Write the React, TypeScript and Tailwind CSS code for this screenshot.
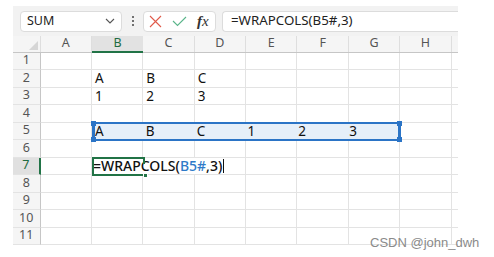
import React from "react";

const COLS = ["A", "B", "C", "D", "E", "F", "G", "H"];
const ROWS = [1, 2, 3, 4, 5, 6, 7, 8, 9, 10, 11];

const cellData: Record<string, string> = {
  "2-1": "A",
  "2-2": "B",
  "2-3": "C",
  "3-1": "1",
  "3-2": "2",
  "3-3": "3",
};

export default function App() {
  return (
    <div
      className="relative w-[494px] h-[257px] bg-white overflow-hidden"
      style={{ fontFamily: '"Noto Sans", "Open Sans", sans-serif' }}
    >
      <div className="ml-[13px] mt-[6px] w-[445px]">
        {/* toolbar */}
        <div className="h-[30px] bg-[#f2f2f2] flex items-center pl-[7px]">
          <div className="w-[102px] h-[21px] bg-white border border-[#dcdcdc] rounded-[4px] flex items-center justify-between pl-[6px] pr-[6px]">
            <span className="text-[12.5px] text-[#222]">SUM</span>
            <svg width="10" height="6" viewBox="0 0 10 6">
              <path d="M1 1 L5 5 L9 1" stroke="#555" strokeWidth="1.1" fill="none" />
            </svg>
          </div>
          <div className="w-[21px] flex flex-col items-center justify-center gap-[2px]">
            <span className="w-[2px] h-[2px] bg-[#444] rounded-full" />
            <span className="w-[2px] h-[2px] bg-[#444] rounded-full" />
            <span className="w-[2px] h-[2px] bg-[#444] rounded-full" />
          </div>
          <div className="w-[73px] h-[21px] bg-white border border-[#dcdcdc] rounded-[4px] flex items-center pl-[5px]">
            <svg width="13" height="13" viewBox="0 0 13 13">
              <path d="M1 1 L12 12 M12 1 L1 12" stroke="#e05a4a" strokeWidth="1.1" fill="none" />
            </svg>
            <svg width="15" height="12" viewBox="0 0 15 12" className="ml-[10px]">
              <path d="M1 6 L5.5 10.5 L14 2" stroke="#5ab58a" strokeWidth="1.1" fill="none" />
            </svg>
            <span
              className="ml-[10px] text-[15px] italic text-[#333] leading-none"
              style={{ fontFamily: '"Liberation Serif", serif' }}
            >
              <b>f</b>x
            </span>
          </div>
          <div className="ml-[6px] flex-1 h-[21px] bg-white border border-r-0 border-[#dcdcdc] rounded-l-[4px] flex items-center pl-[8px]">
            <span className="text-[13.3px] text-[#222]">=WRAPCOLS(B5#,3)</span>
          </div>
        </div>

        {/* grid */}
        <div className="relative">
          {/* header row */}
          <div className="flex h-[16.5px] bg-[#f5f5f5] border-b border-[#c6c6c6]">
            <div className="w-[27.5px] relative border-r border-[#dedede]">
              <div className="absolute right-[2px] bottom-[2px] w-0 h-0 border-l-[9px] border-l-transparent border-b-[9px] border-b-[#d6d6d6]" />
            </div>
            {COLS.map((c) => (
              <div
                key={c}
                className={`w-[51.4px] flex items-center justify-center text-[12.5px] ${
                  c === "B"
                    ? "bg-[#e2e2e2] text-[#1e6b41] border-b-2 border-[#217346] -mb-[1px]"
                    : "text-[#555] border-r border-[#dedede]"
                }`}
              >
                {c}
              </div>
            ))}
            <div className="flex-1" />
          </div>
          {ROWS.map((r) => (
            <div key={r} className="flex h-[17.5px]">
              <div
                className={`w-[27.5px] flex items-center justify-center text-[12.5px] border-b border-[#e3e3e3] ${
                  r === 7
                    ? "bg-[#e0e0e0] text-[#1e6b41] border-r-2 border-r-[#217346]"
                    : "bg-[#f5f5f5] text-[#555] border-r border-r-[#c6c6c6]"
                }`}
              >
                {r}
              </div>
              {COLS.map((c, i) => (
                <div
                  key={c}
                  className="w-[51.4px] border-r border-b border-[#e3e3e3] flex items-center pl-[3px] text-[13.5px] text-[#111]"
                >
                  {cellData[`${r}-${i}`] ?? ""}
                </div>
              ))}
              <div className="flex-1 border-b border-[#e3e3e3]" />
            </div>
          ))}

          {/* range highlight B5:G5 */}
          <div className="absolute left-[79px] top-[86px] w-[309px] h-[18.5px] bg-[#e6eff9] border-2 border-[#2b74c6]">
            <div className="flex h-full items-center text-[13.5px] text-[#111]">
              {["A", "B", "C", "1", "2", "3"].map((t, i) => (
                <div key={i} className="w-[51.4px] h-full flex items-center pl-[1px]">
                  {t}
                </div>
              ))}
            </div>
            <div className="absolute -left-[3px] -top-[3px] w-[5px] h-[5px] bg-[#2b74c6]" />
            <div className="absolute -left-[3px] -bottom-[3px] w-[5px] h-[5px] bg-[#2b74c6]" />
            <div className="absolute -right-[3px] -top-[3px] w-[5px] h-[5px] bg-[#2b74c6]" />
            <div className="absolute -right-[3px] -bottom-[3px] w-[5px] h-[5px] bg-[#2b74c6]" />
            <div className="absolute -left-[2px] top-[2px] w-[3px] h-[11px] bg-[#2b74c6]" />
            <div className="absolute -right-[2px] top-[2px] w-[3px] h-[11px] bg-[#2b74c6]" />
          </div>

          {/* overflow text of B7 */}
          <div className="absolute left-[80px] top-[121.5px] h-[16px] pr-[2px] bg-white flex items-center text-[14px] text-[#111] font-medium whitespace-nowrap">
            <span>=WRAPCOLS(</span>
            <span className="text-[#2f7ac8]">B5#</span>
            <span>,3)</span>
            <span className="ml-[1px] w-[1px] h-[14px] bg-[#111]" />
          </div>

          {/* active cell B7 */}
          <div className="absolute left-[78.5px] top-[121px] w-[53px] h-[18.5px] border-2 border-[#217346] border-r-0">
            <div className="absolute right-0 top-0 w-[2px] h-[5px] bg-[#217346]" />
            <div className="absolute -right-[3px] -bottom-[4px] w-[5px] h-[5px] bg-[#217346] border border-white" />
          </div>
        </div>
      </div>

      <div
        className="absolute left-[370px] top-[233px] text-[13px] text-[#8a8a8a]"
        style={{ fontFamily: '"Liberation Sans", Arial, sans-serif' }}
      >
        CSDN @john_dwh
      </div>
    </div>
  );
}
